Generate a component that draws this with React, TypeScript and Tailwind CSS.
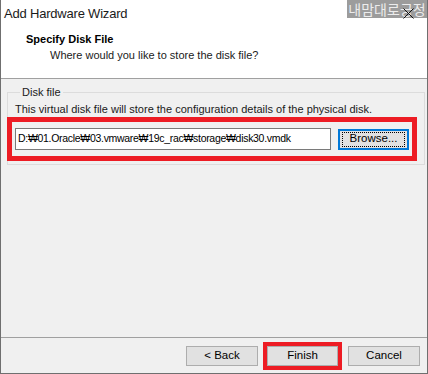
export default function App() {
  const font = "font-['Liberation_Sans','Noto_Sans_CJK_KR',sans-serif]";
  return (
    <div className={`${font} w-[428px] h-[374px] bg-[#f0f0f0] border-x border-b border-[#6f6f6f] flex flex-col text-black select-none`}>
      <div className="relative bg-white h-[79px] border-b border-[#a0a0a0] flex flex-col">
        <div className="h-[27px] flex items-center pl-[3px] text-[13px] tracking-[-0.2px] text-[#1a1a1a]">Add Hardware Wizard</div>
        <div className="absolute top-0 right-0 h-[18px] w-[80px] bg-[#9c9c9c] text-[#ececec] text-[14px] leading-[18px] font-['Noto_Sans_CJK_KR',sans-serif] text-center">
          내맘대로긍정
        </div>
        <svg className="absolute top-[8px] right-[13px]" width="11" height="11" viewBox="0 0 11 11">
          <path d="M0.5 0.5 L10.5 10.5 M10.5 0.5 L0.5 10.5" stroke="#111" strokeWidth="1" />
        </svg>
        <div className="pl-[25px] pt-[5px] text-[11px] font-bold leading-[14px]">Specify Disk File</div>
        <div className="pl-[49px] pt-[2px] text-[11px] leading-[14px] text-[#1a1a1a]">Where would you like to store the disk file?</div>
      </div>

      <div className="flex-1 px-[6px] pt-[6px]">
        <fieldset className="border border-[#dcdcdc] h-[80px] px-[7px]">
          <legend className="ml-[5px] px-[2px] text-[11px] leading-[14px] text-[#1a1a1a]">Disk file</legend>
          <div className="text-[11px] leading-[14px] text-[#1a1a1a] mt-[3px]">
            This virtual disk file will store the configuration details of the physical disk.
          </div>
          <div className="-ml-[8px] mt-[1px] w-[410px] h-[44px] border-[5px] border-[#ed1c24] flex items-center pl-[3px]">
            <div className="w-[316px] h-[22px] bg-white border border-[#7a7a7a] flex items-center pl-[2px] text-[10.5px] tracking-[-0.3px] whitespace-nowrap font-['Liberation_Sans','DejaVu_Sans',sans-serif]">
              D:₩01.Oracle₩03.vmware₩19c_rac₩storage₩disk30.vmdk
            </div>
            <div className="ml-[7px] w-[71px] h-[21px] bg-[#e1e1e1] border-2 border-[#0078d7] flex items-center justify-center">
              <div className="w-[63px] h-[15px] border border-dotted border-black flex items-center justify-center text-[11.5px] leading-none">
                Browse...
              </div>
            </div>
          </div>
        </fieldset>
      </div>

      <div className="h-[36px] border-t border-[#a0a0a0] flex items-center justify-end pr-[7px] pt-[1px]">
        <div className="w-[72px] h-[20px] bg-[#e1e1e1] border border-[#adadad] flex items-center justify-center text-[11.5px]">&lt; Back</div>
        <div className="ml-[5px] border-[4px] border-[#ed1c24]">
          <div className="w-[71px] h-[20px] bg-[#e1e1e1] border border-[#adadad] flex items-center justify-center text-[11.5px]">Finish</div>
        </div>
        <div className="ml-[6px] w-[72px] h-[20px] bg-[#e1e1e1] border border-[#adadad] flex items-center justify-center text-[11.5px]">Cancel</div>
      </div>
    </div>
  );
}
